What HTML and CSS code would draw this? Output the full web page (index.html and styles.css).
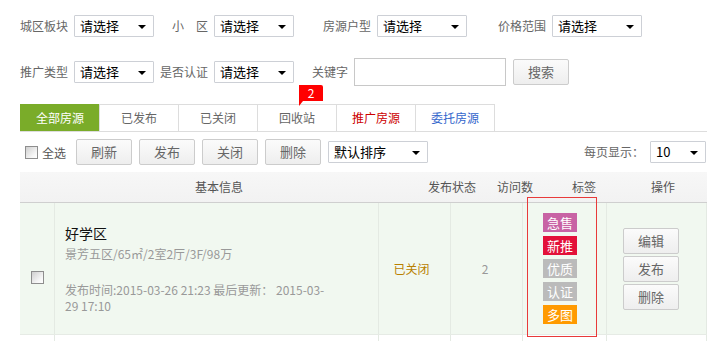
FILE: index.html
```html
<!DOCTYPE html>
<html lang="zh-CN">
<head>
<meta charset="utf-8">
<title>房源管理</title>
<link rel="stylesheet" href="styles.css">
</head>
<body>
<div class="page">
  <div class="filters">
    <div class="frow row1">
      <span class="lbl">城区板块</span>
      <span class="sel w80">请选择</span>
      <span class="lbl ml18">小　区</span>
      <span class="sel w80">请选择</span>
      <span class="lbl ml29">房源户型</span>
      <span class="sel w90">请选择</span>
      <span class="lbl ml31">价格范围</span>
      <span class="sel w90">请选择</span>
    </div>
    <div class="frow row2">
      <span class="lbl">推广类型</span>
      <span class="sel w80">请选择</span>
      <span class="lbl ml6">是否认证</span>
      <span class="sel w80">请选择</span>
      <span class="lbl ml18">关键字</span>
      <input class="kw" type="text">
      <button class="btn search">搜索</button>
    </div>
  </div>

  <div class="tabs">
    <a class="tab active">全部房源</a>
    <a class="tab">已发布</a>
    <a class="tab">已关闭</a>
    <a class="tab has-badge">回收站<span class="badge">2</span></a>
    <a class="tab red">推广房源</a>
    <a class="tab blue last">委托房源</a>
  </div>

  <div class="toolbar">
    <div class="tb-left">
      <input class="chk" type="checkbox">
      <span class="chk-lbl">全选</span>
      <button class="btn tb-btn first">刷新</button>
      <button class="btn tb-btn">发布</button>
      <button class="btn tb-btn">关闭</button>
      <button class="btn tb-btn">删除</button>
      <span class="sel w100">默认排序</span>
    </div>
    <div class="tb-right">
      <span class="lbl">每页显示：</span>
      <span class="sel w56">10</span>
    </div>
  </div>

  <div class="list">
    <div class="thead">
      <div class="th th-info">基本信息</div>
      <div class="th th-status">发布状态</div>
      <div class="th th-visit">访问数</div>
      <div class="th th-tag">标签</div>
      <div class="th th-op">操作</div>
    </div>
    <div class="trow alt">
      <div class="td td-chk"><input class="chk" type="checkbox"></div>
      <div class="td td-info">
        <div class="info">
          <div class="title">好学区</div>
          <div class="desc">景芳五区/65㎡/2室2厅/3F/98万</div>
          <div class="time">发布时间:2015-03-26 21:23 最后更新： 2015-03-<br>29 17:10</div>
        </div>
      </div>
      <div class="td td-status">已关闭</div>
      <div class="td td-visit">2</div>
      <div class="td td-tag">
        <div class="tags">
          <span class="tagx t-urgent">急售</span>
          <span class="tagx t-new">新推</span>
          <span class="tagx t-gray">优质</span>
          <span class="tagx t-gray">认证</span>
          <span class="tagx t-orange">多图</span>
        </div>
      </div>
      <div class="td td-op">
        <div class="ops">
          <button class="btn op-btn">编辑</button>
          <button class="btn op-btn">发布</button>
          <button class="btn op-btn">删除</button>
        </div>
      </div>
    </div>
    <div class="trow">
      <div class="td td-chk"></div>
      <div class="td td-info"></div>
      <div class="td td-status"></div>
      <div class="td td-visit"></div>
      <div class="td td-tag"></div>
      <div class="td td-op"></div>
    </div>
    <div class="mark"></div>
  </div>
</div>
</body>
</html>
```

FILE: styles.css
```css
* { box-sizing: border-box; }
html, body { margin: 0; padding: 0; background: #fff; }
body {
  font-family: "Noto Sans CJK SC", "Noto Sans", sans-serif;
  font-size: 12px;
  color: #666;
}
.page { padding: 15px 0 0 20px; width: 707px; }

.frow { display: flex; align-items: center; }
.row1 { height: 22px; }
.row2 { height: 28px; margin-top: 21px; }
.lbl { color: #666; font-size: 12px; line-height: 16px; white-space: nowrap; margin-right: 6px; }
.ml6 { margin-left: 6px; }
.ml18 { margin-left: 18px; }
.ml29 { margin-left: 29px; }
.ml31 { margin-left: 31px; }

.sel {
  position: relative;
  display: inline-block;
  height: 22px;
  border: 1px solid #cdd0d6;
  border-radius: 1px;
  background: #fff;
  color: #000;
  font-size: 13px;
  line-height: 20px;
  padding-left: 5px;
}
.sel::after {
  content: "";
  position: absolute;
  right: 7px;
  top: 9px;
  border-left: 4px solid transparent;
  border-right: 4px solid transparent;
  border-top: 4px solid #000;
}
.w80 { width: 80px; }
.w90 { width: 90px; }
.w100 { width: 100px; }
.w56 { width: 56px; }

.kw {
  width: 152px;
  height: 28px;
  border: 1px solid #c8c8c8;
  margin: 0;
  padding: 0 4px;
  outline: none;
}

.btn {
  font-family: inherit;
  height: 26px;
  width: 56px;
  margin: 0;
  padding: 0;
  border: 1px solid #cccccc;
  border-radius: 2px;
  background: linear-gradient(#fbfbfb, #eeeeee);
  color: #666;
  font-size: 13px;
  line-height: 22px;
}
.search { margin-left: 7px; height: 26px; }

.tabs {
  display: flex;
  margin-top: 18px;
  height: 28px;
  border-bottom: 1px solid #dddddd;
  width: 687px;
}
.tab {
  position: relative;
  width: 79px;
  height: 27px;
  border-top: 1px solid #dddddd;
  border-left: 1px solid #dddddd;
  text-align: center;
  line-height: 26px;
  font-size: 12px;
  color: #666;
}
.tab.last { border-right: 1px solid #dddddd; width: 80px; }
.tab.active { background: #7aac29; border-color: #7aac29; color: #fff; }
.tab.red { color: #c00; }
.tab.blue { color: #3366cc; }
.badge {
  position: absolute;
  left: 41px;
  top: -20px;
  width: 24px;
  height: 16px;
  background: #ff0000;
  color: #fff;
  font-size: 12px;
  line-height: 16px;
  text-align: center;
  border-radius: 0 2px 0 0;
}
.badge::after {
  content: "";
  position: absolute;
  left: 0;
  top: 16px;
  border-top: 5px solid #ff0000;
  border-right: 4px solid transparent;
}

.toolbar {
  display: flex;
  justify-content: space-between;
  align-items: center;
  width: 687px;
  height: 26px;
  margin-top: 7px;
}
.tb-left, .tb-right { display: flex; align-items: center; }
.tb-right { margin-right: 1px; }
.tb-right .lbl { margin-right: 6px; }
.chk {
  -webkit-appearance: none;
  appearance: none;
  width: 13px;
  height: 13px;
  margin: 0 0 0 5px;
  border: 1px solid #8e8e8e;
  background: linear-gradient(135deg, #cfcfcf, #f6f6f6 70%, #ffffff);
}
.chk-lbl { margin-left: 4px; font-size: 12px; color: #555; }
.tb-btn { margin-left: 7px; }
.tb-btn.first { margin-left: 10px; }
.tb-left .sel { margin-left: 7px; }

.list { position: relative; margin-top: 7px; width: 687px; }
.thead {
  display: flex;
  height: 31px;
  background: linear-gradient(#f7f7f7, #f2f2f2);
  border-bottom: 1px solid #cfcfcf;
  color: #555;
  font-size: 12px;
  line-height: 30px;
}
.th { text-align: center; }
.th-info { width: 398px; }
.th-status { width: 68px; }
.th-visit { width: 58px; }
.th-tag { width: 80px; }
.th-op { width: 78px; }

.trow {
  display: grid;
  grid-template-columns: 35px 324px 72px 72px 84px 100px;
  border-bottom: 1px solid #e6ebe5;
  min-height: 20px;
}
.trow.alt { background: #f1f8f0; }
.td {
  display: flex;
  align-items: center;
  justify-content: center;
  border-right: 1px solid #e4eae3;
}
.td-chk .chk { margin: 18px 0 0 0; }
.td-info { justify-content: flex-start; padding-left: 10px; }
.info { padding-bottom: 1px; }
.title { font-size: 14px; line-height: 20px; color: #111; }
.desc { margin-top: 3px; line-height: 16px; color: #999; font-size: 12px; }
.time { margin-top: 20px; line-height: 16px; color: #999; font-size: 12px; white-space: nowrap; }
.td-status { color: #b98000; padding-right: 6px; }
.td-visit { color: #999; padding-right: 3px; }
.td-tag { justify-content: flex-start; padding: 10px 0 10px 20px; }
.tags { display: flex; flex-direction: column; gap: 4px; }
.tagx {
  display: block;
  width: 34px;
  height: 19px;
  color: #fff;
  font-size: 13px;
  line-height: 19px;
  text-align: center;
}
.t-urgent { background: #c863a4; }
.t-new { background: #e31139; }
.t-gray { background: #bbbbbb; }
.t-orange { background: #ff9a00; }
.td-op { justify-content: flex-start; padding-left: 16px; }
.ops { display: flex; flex-direction: column; gap: 2px; }
.op-btn { width: 56px; height: 26px; }

.mark {
  position: absolute;
  left: 507px;
  top: 25px;
  width: 70px;
  height: 140px;
  border: 1px solid #e83a3a;
  pointer-events: none;
}
```
